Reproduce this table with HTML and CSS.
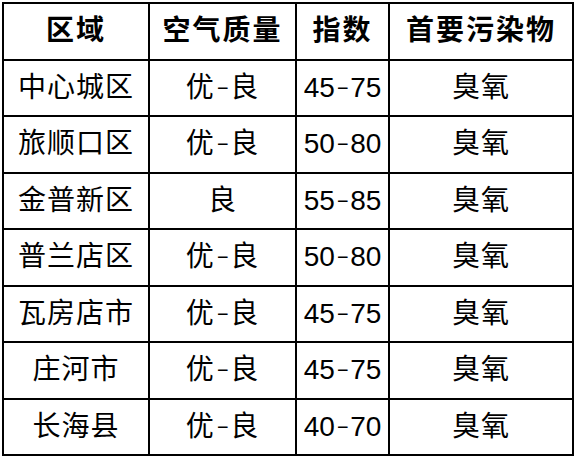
FILE: index.html
```html
<!DOCTYPE html>
<html lang="zh-CN">
<head>
<meta charset="utf-8">
<link rel="stylesheet" href="styles.css">
</head>
<body>
<div class="tbl">
  <div class="c h">区域</div><div class="c h">空气质量</div><div class="c h">指数</div><div class="c h">首要污染物</div>
  <div class="c">中心城区</div><div class="c">优<span class="dash">-</span>良</div><div class="c num">45<span class="dash">-</span>75</div><div class="c">臭氧</div>
  <div class="c">旅顺口区</div><div class="c">优<span class="dash">-</span>良</div><div class="c num">50<span class="dash">-</span>80</div><div class="c">臭氧</div>
  <div class="c">金普新区</div><div class="c">良</div><div class="c num">55<span class="dash">-</span>85</div><div class="c">臭氧</div>
  <div class="c">普兰店区</div><div class="c">优<span class="dash">-</span>良</div><div class="c num">50<span class="dash">-</span>80</div><div class="c">臭氧</div>
  <div class="c">瓦房店市</div><div class="c">优<span class="dash">-</span>良</div><div class="c num">45<span class="dash">-</span>75</div><div class="c">臭氧</div>
  <div class="c">庄河市</div><div class="c">优<span class="dash">-</span>良</div><div class="c num">45<span class="dash">-</span>75</div><div class="c">臭氧</div>
  <div class="c">长海县</div><div class="c">优<span class="dash">-</span>良</div><div class="c num">40<span class="dash">-</span>70</div><div class="c">臭氧</div>
</div>
</body>
</html>
```
FILE: styles.css
```css
html, body {
  margin: 0;
  padding: 0;
  background: #fff;
}
.tbl {
  margin: 2px 0 0 2px;
  width: 572px;
  display: grid;
  grid-template-columns: 144px 145px 91px 182px;
  grid-auto-rows: 54.5px;
  gap: 2px;
  padding: 2px;
  box-sizing: border-box;
  background: #000;
  font-family: "Liberation Sans", "Noto Sans CJK SC", sans-serif;
  font-size: 28px;
  color: #000;
}
.c {
  background: #fff;
  display: flex;
  align-items: center;
  justify-content: center;
  line-height: 1;
  letter-spacing: 1px;
}
.h {
  font-weight: bold;
  letter-spacing: 2px;
}
.num {
  letter-spacing: 0;
}
.dash {
  display: inline-block;
  letter-spacing: 0;
  transform: scaleX(1.4) scaleY(0.7);
  margin: 0 3px;
}
```
